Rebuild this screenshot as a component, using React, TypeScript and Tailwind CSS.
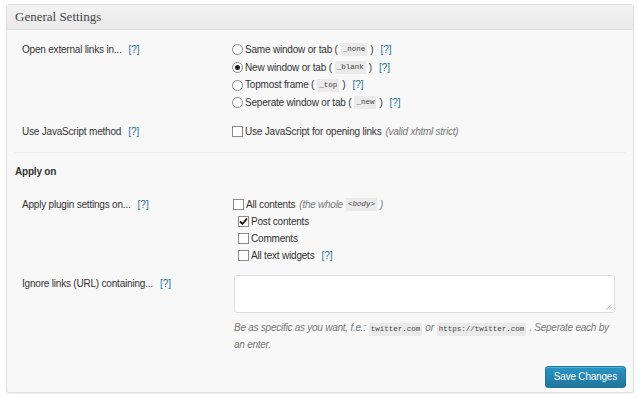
import React from "react";

const Help = () => <span className="text-[#21759b] ml-[7px] tracking-normal">[?]</span>;

const Code = ({ children }: { children: React.ReactNode }) => (
  <code className="bg-[#eaeaea] px-[2px] mx-[3px] text-[7.5px] leading-[13px] inline-block not-italic tracking-normal text-[#444]" style={{ fontFamily: '"Liberation Mono", monospace' }}>
    {children}
  </code>
);

const Radio = ({ checked }: { checked?: boolean }) => (
  <span className="w-[11px] h-[11px] rounded-full border border-[#8a8a8a] bg-white inline-flex items-center justify-center mr-[2px] shrink-0">
    {checked && <span className="w-[5px] h-[5px] rounded-full bg-[#222]" />}
  </span>
);

const Check = ({ checked }: { checked?: boolean }) => (
  <span className="w-[11px] h-[11px] border border-[#8a8a8a] bg-white inline-flex items-center justify-center mr-[2px] shrink-0">
    {checked && (
      <svg width="9" height="9" viewBox="0 0 9 9">
        <path d="M1 4.5 L3.5 7 L8 1.5" stroke="#111" strokeWidth="1.8" fill="none" />
      </svg>
    )}
  </span>
);

export default function App() {
  return (
    <div className="w-[640px] h-[398px] bg-white pt-[4px] pl-[6px] text-[10px] text-[#333] tracking-[-0.2px]" style={{ fontFamily: '"Liberation Sans", Arial, sans-serif' }}>
      <div className="w-[628px] h-[389px] border border-[#dfdfdf] rounded-[3px] bg-[#f8f8f8] shadow-[0_1px_1px_rgba(0,0,0,0.05)] flex flex-col">
        <div className="h-[25px] border-b border-[#dfdfdf] bg-gradient-to-b from-[#f3f3f3] to-[#e9e9e9] flex items-center pl-[8px] rounded-t-[3px]">
          <span className="text-[13px] text-[#464646] tracking-normal" style={{ fontFamily: '"Liberation Serif", Georgia, serif' }}>General Settings</span>
        </div>
        <div className="pl-[8px] pr-[8px] flex flex-col">
          {/* Row 1 */}
          <div className="flex pl-[7px] pt-[11px]">
            <div className="w-[210px] leading-[18px]">Open external links in...<Help /></div>
            <div className="flex flex-col leading-[17.7px]">
              <div className="flex items-center"><Radio />Same window or tab (<Code>_none</Code>)<Help /></div>
              <div className="flex items-center"><Radio checked />New window or tab (<Code>_blank</Code>)<Help /></div>
              <div className="flex items-center"><Radio />Topmost frame (<Code>_top</Code>)<Help /></div>
              <div className="flex items-center"><Radio />Seperate window or tab (<Code>_new</Code>)<Help /></div>
            </div>
          </div>
          {/* Row 2 */}
          <div className="flex pl-[7px] pt-[11px] pb-[11px] border-b border-[#ececec]">
            <div className="w-[210px] leading-[18px]">Use JavaScript method<Help /></div>
            <div className="flex items-center leading-[18px]">
              <Check />Use JavaScript for opening links<span className="italic text-[#777] ml-[4px] tracking-[-0.25px]">(valid xhtml strict)</span>
            </div>
          </div>
          <div className="font-bold leading-[18px] mt-[10px]">Apply on</div>
          {/* Row 3 */}
          <div className="flex pl-[7px] pt-[15px]">
            <div className="w-[211px] leading-[17px]">Apply plugin settings on...<Help /></div>
            <div className="flex flex-col leading-[17px]">
              <div className="flex items-center"><Check />All contents<span className="italic text-[#777] ml-[4px] tracking-[-0.25px]">(the whole</span><Code><i>&lt;body&gt;</i></Code><span className="italic text-[#777]">)</span></div>
              <div className="flex items-center pl-[5px]"><Check checked />Post contents</div>
              <div className="flex items-center pl-[5px]"><Check />Comments</div>
              <div className="flex items-center pl-[5px]"><Check />All text widgets<Help /></div>
            </div>
          </div>
          {/* Row 4 */}
          <div className="flex pl-[7px] pt-[11px]">
            <div className="w-[212px] leading-[18px]">Ignore links (URL) containing...<Help /></div>
            <div className="flex flex-col">
              <div className="w-[381px] h-[38px] bg-white border border-[#dcdcdc] rounded-[3px] relative">
                <svg className="absolute right-[2px] bottom-[2px]" width="6" height="6" viewBox="0 0 6 6">
                  <path d="M5.5 0.5 L0.5 5.5 M5.5 3 L3 5.5" stroke="#999" strokeWidth="0.8" />
                </svg>
              </div>
              <div className="italic text-[#777] leading-[17px] mt-[6px] w-[381px] tracking-[-0.25px]">
                Be as specific as you want, f.e.:<Code>twitter.com</Code>or<Code>https://twitter.com</Code>. Seperate each by an enter.
              </div>
            </div>
          </div>
          <div className="flex justify-end mt-[13px]">
            <button className="h-[22px] px-[8px] rounded-[3px] border border-[#21759b] bg-gradient-to-b from-[#2a95c5] to-[#21759b] text-white text-[10px] shadow-[inset_0_1px_0_rgba(120,200,230,0.5)] mr-[-1px]">
              Save Changes
            </button>
          </div>
        </div>
      </div>
    </div>
  );
}
